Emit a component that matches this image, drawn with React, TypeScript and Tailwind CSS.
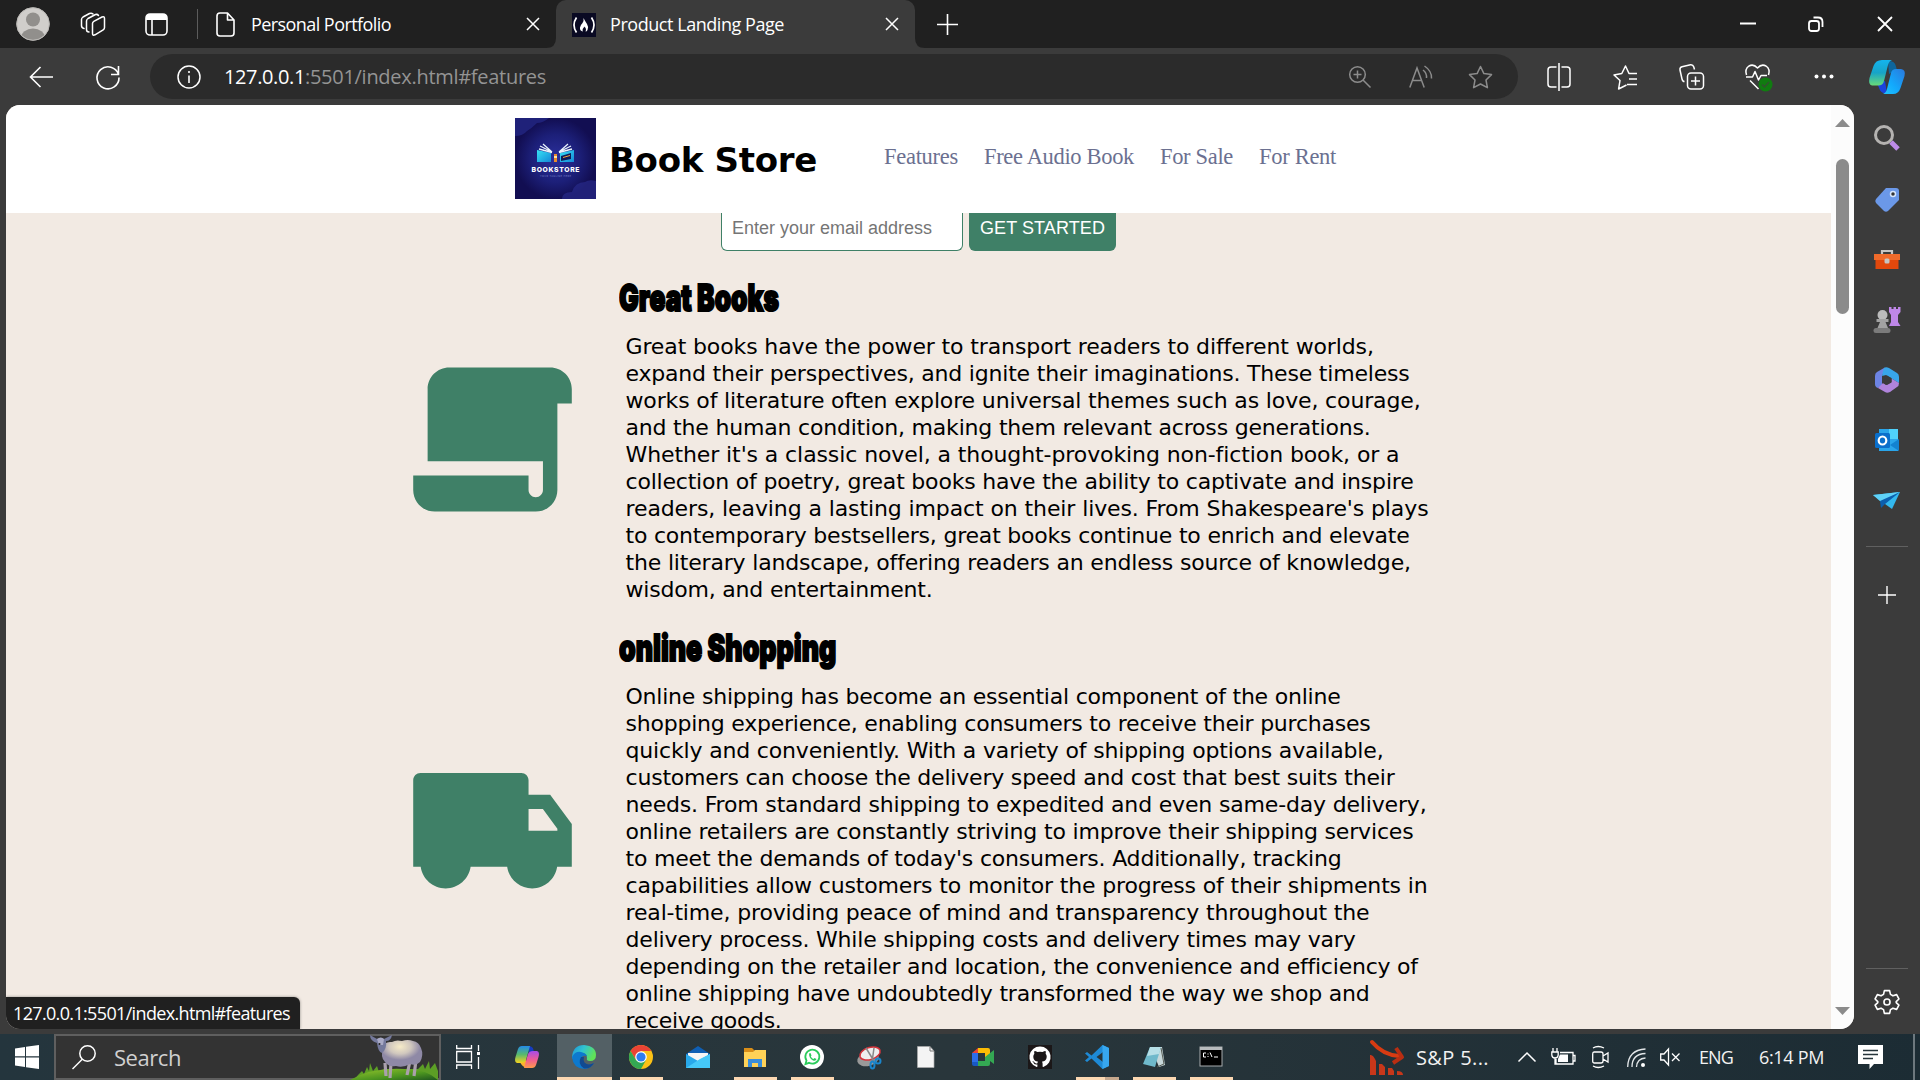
import React, { useLayoutEffect, useRef } from "react";

/* Single line of text whose tracking is adjusted so that it spans `w` pixels. */
function Fit({ w, children, className = "" }: { w: number; children: string; className?: string }) {
  const ref = useRef<HTMLSpanElement>(null);
  useLayoutEffect(() => {
    const el = ref.current;
    if (!el) return;
    el.style.letterSpacing = "0px";
    const natural = el.getBoundingClientRect().width;
    el.style.letterSpacing = (w - natural) / children.length + "px";
  }, [w, children]);
  return (
    <span ref={ref} className={"inline-block shrink-0 whitespace-pre " + className}>
      {children}
    </span>
  );
}

/* Heavy condensed heading, squeezed horizontally to `w` pixels. */
function Squeeze({ w, children, className = "" }: { w: number; children: string; className?: string }) {
  const ref = useRef<HTMLSpanElement>(null);
  useLayoutEffect(() => {
    const el = ref.current;
    if (el) el.style.transform = "scaleX(" + w / el.offsetWidth + ")";
  }, [w, children]);
  return (
    <span ref={ref} className={"inline-block origin-left whitespace-pre " + className}>
      {children}
    </span>
  );
}

type IconProps = { w: number; h: number; vb?: string; className?: string; children: React.ReactNode };
function Ico({ w, h, vb, className = "", children }: IconProps) {
  return (
    <svg width={w} height={h} viewBox={vb ?? `0 0 ${w} ${h}`} className={"shrink-0 overflow-visible " + className} fill="none" stroke="none">
      {children}
    </svg>
  );
}

const CloseX = ({ className = "" }: { className?: string }) => (
  <Ico w={14} h={14} className={className}>
    <path d="M1 1L13 13M13 1L1 13" stroke="#fff" strokeWidth="1.5" />
  </Ico>
);

function TabStrip() {
  return (
    <div className="flex h-12 items-center bg-[#202020] text-white">
      <Ico w={34} h={34} className="ml-4">
        <defs><clipPath id="av"><circle cx="17" cy="17" r="16" /></clipPath></defs>
        <circle cx="17" cy="17" r="16.5" fill="#d0cecb" />
        <g clipPath="url(#av)"><circle cx="17" cy="12.5" r="7" fill="#918f8c" /><ellipse cx="17" cy="31" rx="12" ry="9.5" fill="#918f8c" /></g>
        <circle cx="17" cy="17" r="16.3" stroke="#bab8b5" strokeWidth="1" />
      </Ico>
      <Ico w={26} h={25} className="ml-[30px]">
        <g stroke="#fff" strokeWidth="1.5" strokeLinejoin="round" strokeLinecap="round">
          <path d="M12.5 11.500Q12.500 10 13.800 9.300L22 5Q24.500 4 24.500 6.500V15.500Q24.500 17 23.200 17.800L15 22.800Q12.500 24 12.500 21.500Z" />
          <path d="M9 20Q6.500 20 6.500 17.500V9Q6.500 7.500 8 6.500L15.500 2.500Q17.500 2 18.500 3.500" />
          <path d="M4 16.500Q1.500 16 1.500 13.500V7.500Q1.500 6 3 5L9.500 1.500Q11.500 .6 13 2" />
        </g>
      </Ico>
      <Ico w={23} h={23} className="ml-[39px]">
        <rect x="1" y="1" width="21" height="21" rx="4" stroke="#fff" strokeWidth="1.6" />
        <path d="M1 7V5Q1 1 5 1H18Q22 1 22 5V7Z" fill="#fff" /><path d="M7 6V22" stroke="#fff" strokeWidth="1.6" />
      </Ico>
      <div className="ml-[29px] h-[30px] w-px bg-[#5c5c5c]" />
      <Ico w={19} h={25} className="ml-[18px]">
        <path d="M4 1H11.500L18 8V21Q18 24 15 24H4Q1 24 1 21V4Q1 1 4 1ZM11.500 1V8H18" stroke="#fff" strokeWidth="1.6" strokeLinejoin="round" />
      </Ico>
      <div className="mb-px ml-4 w-[275px] leading-none"><Fit w={140} className="text-[18px]">Personal Portfolio</Fit></div>
      <CloseX />
      <div className="relative ml-4 flex h-12 w-[359px] items-center rounded-t-[10px] bg-[#3b3b3b]">
        <Ico w={10} h={10} className="absolute bottom-0 -left-2.5"><path d="M10 0V10H0Q10 10 10 0Z" fill="#3b3b3b" /></Ico>
        <Ico w={10} h={10} className="absolute bottom-0 -right-2.5"><path d="M0 0V10H10Q0 10 0 0Z" fill="#3b3b3b" /></Ico>
        <Ico w={24} h={24} className="mt-0.5 ml-4">
          <rect width="24" height="24" fill="#0a0a23" />
          <path d="M4.500 4.500Q-.5 12 4.500 19.500M19.500 4.500Q24.500 12 19.500 19.500" stroke="#fff" strokeWidth="1.7" />
          <path d="M11.500 5Q13 8 15 11Q17 14 15.500 17Q14.800 18.500 13.500 18.500Q15 15.500 12 13.500Q12 15 11 15.500Q10 17 11 18.500Q7.500 18 8 14.500Q8.500 12 10.500 10Q12 8 11.500 5Z" fill="#fff" />
        </Ico>
        <div className="mb-px ml-[14px] w-[275px] leading-none"><Fit w={174} className="text-[18px]">Product Landing Page</Fit></div>
        <CloseX />
      </div>
      <Ico w={21} h={21} className="ml-[22px]"><path d="M10.500 0V21M0 10.500H21" stroke="#fff" strokeWidth="1.6" /></Ico>
      <Ico w={16} h={16} className="ml-auto"><path d="M0 7.500H16" stroke="#fff" strokeWidth="2" /></Ico>
      <Ico w={16} h={16} className="ml-[52px]">
        <rect x="1" y="5" width="10" height="10" rx="2.500" stroke="#fff" strokeWidth="1.8" /><path d="M5.500 1.500H10Q14.500 1.500 14.500 6V11" stroke="#fff" strokeWidth="1.8" />
      </Ico>
      <Ico w={16} h={16} className="mr-[27px] ml-[53px]"><path d="M1 1L15 15M15 1L1 15" stroke="#fff" strokeWidth="1.8" /></Ico>
    </div>
  );
}

const STAR = "M12.500 1.500L15.900 8.600L23.500 9.600L18 15L19.400 22.700L12.500 19L5.600 22.700L7 15L1.500 9.600L9.100 8.600Z";

function Toolbar() {
  return (
    <div className="flex h-[57px] items-center bg-[#3b3b3b]">
      <Ico w={24} h={22} className="ml-[29px]"><path d="M24 11H1.500M11.500 1L1.500 11L11.500 21" stroke="#fff" strokeWidth="1.6" /></Ico>
      <Ico w={24} h={24} className="ml-[43px]"><path d="M22.500 9.500A11 11 0 1 0 23 12.500M22.500 1V9.500H15" stroke="#fff" strokeWidth="1.6" /></Ico>
      <div className="ml-[30px] flex h-[45px] w-[1368px] items-center rounded-full bg-[#2b2b2b] text-[20px] leading-none">
        <Ico w={24} h={24} className="ml-[27px]"><circle cx="12" cy="12" r="11" stroke="#fff" strokeWidth="1.5" /><path d="M12 10.500V18M12 6V8" stroke="#fff" strokeWidth="1.6" /></Ico>
        <Fit w={81} className="ml-[23px] text-white">127.0.0.1</Fit>
        <Fit w={241} className="text-[#949494]">:5501/index.html#features</Fit>
        <Ico w={22} h={22} className="ml-auto"><g stroke="#8c8c8c" strokeWidth="1.5"><circle cx="8.500" cy="8.500" r="7.800" /><path d="M14 14L21.500 21.500M8.500 4.500V12.500M4.500 8.500H12.500" /></g></Ico>
        <Ico w={24} h={22} className="ml-[38px]"><g stroke="#8c8c8c" strokeWidth="1.5"><path d="M.8 21.500L8 2L15.200 21.500M3 14.500H13M14 4Q18 7 17.500 12M15.500 0Q23 5 22.500 12.500" /></g></Ico>
        <Ico w={25} h={24} className="mr-[25px] ml-[35px]"><path d={STAR} stroke="#8c8c8c" strokeWidth="1.500" strokeLinejoin="round" /></Ico>
      </div>
      <Ico w={24} h={28} className="ml-[29px]"><path d="M9.500 4H4Q1 4 1 7V21Q1 24 4 24H9.500M14.500 4H20Q23 4 23 7V21Q23 24 20 24H14.500M12 0V28" stroke="#fff" strokeWidth="1.5" /></Ico>
      <Ico w={25} h={26} className="ml-[42px]"><path d="M13.500 21L5.600 25L7 16.500L1 11L8.800 9.500L12.500 2L16 9.500H24M16 15H24M14 20.500H24" stroke="#fff" strokeWidth="1.5" strokeLinejoin="round" /></Ico>
      <Ico w={25} h={26} className="ml-[41px]"><g stroke="#fff" strokeWidth="1.5"><rect x="8.500" y="9" width="16" height="16" rx="3.500" /><path d="M16.500 12.500V21.500M12 17H21M5.500 17.500Q3.500 17.500 3 15L1 6Q.6 3.500 3 2.800L11.500 .8Q14 .5 14.800 3L15.500 5.500" /></g></Ico>
      <Ico w={28} h={28} className="ml-[41px]"><g stroke="#fff" strokeWidth="1.500" strokeLinejoin="round"><path d="M1.500 12Q-.5 6 4 3Q8.500 .5 12.500 5Q16.500 .5 21 3Q25.500 6 23.500 12M1 14H7.500L10 8.500L13.500 17L16 12.500H22M5 17.500L13.500 26" /></g><circle cx="20.500" cy="21.500" r="7" fill="#107c10" /><path d="M17 21.500L19.500 24L24 19" stroke="#33502f" strokeWidth="1.5" /></Ico>
      <Ico w={20} h={5} className="ml-[41px]"><g fill="#fff"><circle cx="2.500" cy="2.500" r="2" /><circle cx="10" cy="2.500" r="2" /><circle cx="17.500" cy="2.500" r="2" /></g></Ico>
      <Ico w={36} h={34} vb="0 0 36 34" className="ml-[35px]">
        <defs>
          <linearGradient id="ca" x1="0" y1="0" x2="0" y2="1"><stop offset="0" stopColor="#14b4ee" /><stop offset=".5" stopColor="#17a4c8" /><stop offset="1" stopColor="#68da79" /></linearGradient>
          <linearGradient id="cb" x1="1" y1="0" x2="0" y2="1"><stop offset="0" stopColor="#2b78dc" /><stop offset=".6" stopColor="#12aafd" /><stop offset="1" stopColor="#22c4fb" /></linearGradient>
        </defs>
        <path d="M19 1Q25 .5 26.500 5L28 10L20 14Z" fill="#0e669c" />
        <path d="M8 23L16 21L18 33Q12 34 10.500 29Z" fill="#1b43dc" />
        <path d="M13 0H23Q20 1 19 5L15 21Q14 25.500 9 25.500H3Q-1 25 .5 18L4.500 6Q6.500 0 13 0Z" fill="url(#ca)" />
        <path d="M27 9H32Q37 9.500 35.500 16L31.500 28Q29.500 34 24 34H14Q17 33 18 29L22 13Q23 9 27 9Z" fill="url(#cb)" />
      </Ico>
    </div>
  );
}

function BookLogo() {
  return (
    <svg width="81" height="81" viewBox="0 0 81 81" className="mb-px shrink-0">
      <defs>
        <radialGradient id="lg"><stop offset="0" stopColor="#2b2f9c" /><stop offset=".6" stopColor="#1c1f78" /><stop offset="1" stopColor="#120e52" /></radialGradient>
        <linearGradient id="lb" x1="0" y1="0" x2="1" y2="1"><stop offset="0" stopColor="#37e3f4" /><stop offset="1" stopColor="#1488d8" /></linearGradient>
      </defs>
      <rect width="81" height="81" fill="url(#lg)" />
      <path d="M0 18Q8 18 12 13Q17 10 22 5Q28 5 34 0H0Z" fill="#252a8a" opacity=".7" />
      <path d="M47 81Q47 74 57 74Q60 64 70 64Q74 61 81 63V81Z" fill="#2b2f92" opacity=".6" />
      <path d="M22 32L36 35V44H22Z" fill="url(#lb)" /><path d="M59 32L45 35V44H59Z" fill="url(#lb)" />
      <path d="M46 38L56 35V41L46 43Z" fill="#101b58" /><path d="M48 39.500L55 37.500" stroke="#f1a23b" />
      <path d="M39 36H42V44H39Z" fill="#e88a2c" /><path d="M39 38H42V40H39Z" fill="#ffe2a0" />
      <path d="M24 31L37 34.500M25 28L37 34M28 26L37 34M57 31L44 34.500M56 28L44 34M53 26L44 34" stroke="#e9f3fb" strokeWidth="1.3" />
      <text x="40.500" y="54" textAnchor="middle" textLength="48" fill="#fff" fontFamily="Inter, sans-serif" fontWeight="800" fontSize="6.800">BOOKSTORE</text>
      <text x="40.500" y="58.500" textAnchor="middle" textLength="31" fill="#7a80c8" fontFamily="Inter, sans-serif" fontSize="2.500">YOUR TAGLINE HERE</text>
    </svg>
  );
}

const books: [string, number][] = [
  ["Great books have the power to transport readers to different worlds,", 748],
  ["expand their perspectives, and ignite their imaginations. These timeless", 784],
  ["works of literature often explore universal themes such as love, courage,", 795],
  ["and the human condition, making them relevant across generations.", 745],
  ["Whether it's a classic novel, a thought-provoking non-fiction book, or a", 774],
  ["collection of poetry, great books have the ability to captivate and inspire", 788],
  ["readers, leaving a lasting impact on their lives. From Shakespeare's plays", 803],
  ["to contemporary bestsellers, great books continue to enrich and elevate", 784],
  ["the literary landscape, offering readers an endless source of knowledge,", 785],
  ["wisdom, and entertainment.", 307],
];
const shopping: [string, number][] = [
  ["Online shipping has become an essential component of the online", 715],
  ["shopping experience, enabling consumers to receive their purchases", 745],
  ["quickly and conveniently. With a variety of shipping options available,", 758],
  ["customers can choose the delivery speed and cost that best suits their", 769],
  ["needs. From standard shipping to expedited and even same-day delivery,", 801],
  ["online retailers are constantly striving to improve their shipping services", 788],
  ["to meet the demands of today's consumers. Additionally, tracking", 716],
  ["capabilities allow customers to monitor the progress of their shipments in", 802],
  ["real-time, providing peace of mind and transparency throughout the", 744],
  ["delivery process. While shipping costs and delivery times may vary", 730],
  ["depending on the retailer and location, the convenience and efficiency of", 792],
  ["online shipping have undoubtedly transformed the way we shop and", 744],
  ["receive goods.", 156],
];

function Feature({ title, titleW, lines, icon, className }: { title: string; titleW: number; lines: [string, number][]; icon: React.ReactNode; className: string }) {
  return (
    <div className={"flex pl-[399.500px] " + className}>
      {icon}
      <div className="ml-10">
        <h2 className="h-[55px] font-[Inter] text-[36.500px] leading-[40px] font-black">
          <Squeeze w={titleW} className="[-webkit-text-stroke:2px_black]">{title}</Squeeze>
        </h2>
        <p className="pl-[7px] font-['DejaVu_Sans'] text-[22px] leading-[27px]">
          {lines.map(([t, w]) => (
            <span key={t} className="block h-[27px]"><Fit w={w}>{t}</Fit></span>
          ))}
        </p>
      </div>
    </div>
  );
}

function Page() {
  return (
    <div className="relative ml-1.5 flex h-[924px] w-[1848px] overflow-hidden rounded-[14px] bg-[#f2eae3] text-black">
      <div className="flex w-[1825px] flex-col">
        <header className="flex h-[108px] shrink-0 items-center bg-white">
          <div className="ml-[509px]"><BookLogo /></div>
          <Fit w={208} className="mt-0.5 ml-[13px] font-['DejaVu_Sans'] text-[34px] font-bold">Book Store</Fit>
          <nav className="mb-1 ml-[67px] flex gap-[26px] font-['Liberation_Serif'] text-[22.500px] text-[#6b7090]">
            <Fit w={74}>Features</Fit><Fit w={150}>Free Audio Book</Fit><Fit w={73}>For Sale</Fit><Fit w={77}>For Rent</Fit>
          </nav>
        </header>
        <form className="ml-[715px] flex h-[38px] shrink-0 gap-1.5 font-['Liberation_Sans'] text-[18px] leading-[30px]">
          <div className="w-[242px] rounded-b-[6px] border border-t-0 border-[#3f8067] bg-white pl-2.5 text-[#757575]"><Fit w={200}>Enter your email address</Fit></div>
          <div className="w-[147px] rounded-b-[6px] bg-[#3f8067] pl-[11px] text-white"><Fit w={125}>GET STARTED</Fit></div>
        </form>
        <Feature className="mt-[27px]" title="Great Books" titleW={160} lines={books} icon={
          <svg width="173" height="173" viewBox="0 0 24 24" fill="#3f8067" className="mt-[75px] shrink-0">
            <path d="M20 2C21.660 2 23 3.340 23 5V7H21V19C21 20.660 19.660 22 18 22H4C2.340 22 1 20.660 1 19V17H17V19C17 19.550 17.450 20 18 20C18.550 20 19 19.550 19 19V15H3V5C3 3.340 4.340 2 6 2H20Z" />
          </svg>} />
        <Feature className="mt-[25px]" title="online Shopping" titleW={217} lines={shopping} icon={
          <svg width="173" height="173" viewBox="0 0 24 24" fill="#3f8067" className="mt-[109px] shrink-0">
            <path d="M8.965 18C8.722 19.696 7.263 21 5.500 21S2.278 19.696 2.035 18H1V6C1 5.448 1.448 5 2 5H16C16.552 5 17 5.448 17 6V8H20L23 12.056V18H20.965C20.722 19.696 19.263 21 17.500 21S14.278 19.696 14.035 18H8.965ZM17 10V13H21V12.715L18.992 10H17Z" />
          </svg>} />
      </div>
      <div className="flex w-[23px] flex-col items-center bg-[#fcfcfc]">
        <Ico w={15} h={8} className="mt-[14px]"><path d="M0 8L7.500 0L15 8Z" fill="#8b8b8b" /></Ico>
        <div className="mt-8 h-[155px] w-[13px] rounded-full bg-[#8b8b8b]" />
        <Ico w={15} h={8} className="mt-auto mb-[14px]"><path d="M0 0L7.500 8L15 0Z" fill="#8b8b8b" /></Ico>
      </div>
      <div className="absolute bottom-0 left-0 flex h-8 w-[294px] items-center rounded-tr-[6px] bg-[#202020] pl-[7px] font-['Open_Sans'] text-[18px] text-white shadow-[0_0_3px_rgba(0,0,0,0.4)]">
        <Fit w={277}>127.0.0.1:5501/index.html#features</Fit>
      </div>
    </div>
  );
}

const sideIcons: React.ReactNode[] = [
  <g key="s"><circle cx="11" cy="11" r="8.500" stroke="#b5b3b1" strokeWidth="3" /><path d="M18 18L25 25" stroke="#bd8be8" strokeWidth="5" /></g>,
  <g key="t"><path d="M13 3H23Q26 3 26 6V15L15 26Q13 27.500 11 26L3 18Q1.500 16 3 14Z" fill="#6b98e8" /><circle cx="20" cy="9" r="2.500" fill="#333" stroke="#d6e5fb" strokeWidth="1.5" /></g>,
  <g key="b"><path d="M9 10V6H19V10" stroke="#c6c4c2" strokeWidth="2.200" /><path d="M1 9H27V15H1Z" fill="#f06a2a" /><path d="M2.500 15H25.500V24H2.500Z" fill="#e2480c" /><rect x="11.500" y="13.500" width="5" height="5" rx="1.500" fill="#c6c4c2" /></g>,
  <g key="c"><path d="M16 1H18.500V3H20.500V1H23V3H25V1H27.500V6L25 9V16L27.500 20H16L18 16V9L16 6Z" fill="#bf87e8" /><circle cx="9.500" cy="9" r="5" fill="#bbb" /><path d="M3.500 13H15.500V16H12.500L15 22H4.500L7 16H3.500Z" fill="#a2a2a2" /><rect x=".5" y="22" width="17" height="5" rx="2.500" fill="#7b7b7b" /></g>,
  <g key="m"><path d="M11 2L4 6Q2 7 2 10V18Q2 21 5 22L9 20V9L15 5L12 1.500Z" fill="#6d84e4" /><path d="M11 2Q13 .5 16 2L24 7Q26 8 26 11V17L18.500 12.500L13 9L9 10Q10 5 11 2Z" fill="#38a6ea" /><path d="M5 22L10 17L13 19L18.500 16V12.500L26 17Q26 20 24 21L17 26Q14 27.500 12 26Z" fill="#b084dc" /><path d="M10 12L14 9.500L18.500 12V16.500L14 19L10 17Z" fill="#3b3b3b" /></g>,
  <g key="o"><path d="M6 2H25V24H6Z" fill="#2aa5ea" /><path d="M16 2H25V12H16Z" fill="#50d2fa" /><path d="M26 12L17 18L26 24Z" fill="#1382d0" /><rect x="2" y="6" width="15" height="15" rx="1.500" fill="#0a6fcb" /><ellipse cx="9.500" cy="13.500" rx="3.800" ry="4" stroke="#fff" strokeWidth="2.200" /></g>,
  <g key="p"><path d="M0 8L27 5L19 22L12 17Z" fill="#33b8ee" /><path d="M0 8L27 5L8 15Z" fill="#5fd2f8" /><path d="M7 14L27 5L12 17L8 21Z" fill="#0c5fae" /></g>,
];

function Sidebar() {
  return (
    <aside className="flex w-[66px] flex-col items-center">
      <div className="mt-[19px] flex flex-col gap-[32.500px]">
        {sideIcons.map((icon, i) => <Ico key={i} w={28} h={28}>{icon}</Ico>)}
      </div>
      <div className="mt-[31px] h-px w-[42px] shrink-0 bg-[#606060]" />
      <Ico w={18} h={18} className="mt-[39px] mr-px"><path d="M9 0V18M0 9H18" stroke="#fff" strokeWidth="1.4" /></Ico>
      <div className="mt-auto h-px w-[42px] shrink-0 bg-[#606060]" />
      <Ico w={26} h={26} vb="0 0 24 24" className="mt-5 mb-[19px]">
        <path d="M9.600 1.500H14.400L15.200 5L17.500 6.300L20.900 5.200L23 9.200L20.500 11.700V12.500L23 14.800L20.900 18.800L17.500 17.700L15.200 19L14.400 22.500H9.600L8.800 19L6.500 17.700L3.100 18.800L1 14.800L3.500 12.500V11.700L1 9.200L3.100 5.200L6.500 6.300L8.800 5Z" stroke="#fff" strokeWidth="1.500" strokeLinejoin="round" /><circle cx="12" cy="12" r="2.800" stroke="#fff" strokeWidth="1.500" />
      </Ico>
    </aside>
  );
}

function Sheep() {
  return (
    <svg width="88" height="45" viewBox="0 0 88 45" className="ml-auto shrink-0">
      <defs>
        <linearGradient id="gr" x1="0" y1="0" x2="1" y2="1"><stop offset="0" stopColor="#9ac92d" /><stop offset=".6" stopColor="#4b9420" /><stop offset="1" stopColor="#1e551f" /></linearGradient>
        <radialGradient id="wool" cx=".45" cy=".25"><stop offset="0" stopColor="#f6ebc8" /><stop offset=".55" stopColor="#d0c7be" /><stop offset="1" stopColor="#8f89a6" /></radialGradient>
      </defs>
      <path d="M8 40L12 36L14 39L17 32L19 36L20 28L23 36L27 31L29 37L34 34H68L73 29L75 34L79 26L80 34L85 28L88 36V45H4Z" fill="#5c9e25" />
      <path d="M0 45Q22 32 55 34Q76 34 88 45Z" fill="url(#gr)" />
      <path d="M35 28L36 41M41 28L40 43M60 26L57 40M66 25L64 41" stroke="#aaa0ac" strokeWidth="3.200" />
      <path d="M33 13Q34 6 42 7Q46 4.500 52 6Q58 4 63 6Q69 7 71 13Q74 20 70 27Q66 31 60 29Q53 33 46 31Q38 32 35 27Q30 22 33 13Z" fill="url(#wool)" />
      <path d="M20 0L27 4Q31 2 34 4L42 0Q41 6 36 6Q37 14 32 18Q28 17 27 8Q20 6 20 0Z" fill="#74799c" />
      <path d="M27 4Q31 1 34 4L33 10H29Z" fill="#a9aac6" /><circle cx="29.500" cy="9" r="1" fill="#222" />
    </svg>
  );
}

type App = { name: string; active?: boolean; open?: boolean; icon: React.ReactNode };
const apps: App[] = [
  { name: "copilot", icon: <g>
    <path d="M13 1Q18 1 18.500 5L19 9H14Z" fill="#163cc2" /><path d="M5 17L11 15L12 23Q7 22 5 17Z" fill="#ffb12d" />
    <path d="M7 1H15L11 15Q10 18 6 18H2Q-1 17 .5 12L3 4Q4 1 7 1Z" fill="url(#tkA)" /><path d="M18 6H22Q25 7 23.500 12L21 20Q20 23 17 23H9L13 9Q14 6 18 6Z" fill="url(#tkB)" /></g> },
  { name: "edge", active: true, open: true, icon: <g>
    <path d="M0 12Q1 0 12 0Q24 1 24 10Q24 16 18 16Q14 16 15 13Q15 8 9 8Q3 8 0 14Z" fill="url(#tkE)" />
    <path d="M0 12Q3 6 9 7Q14 8 15 11Q9 10 9 15Q10 21 17 20.500L22 18Q18 24 12 24Q1 23 0 12Z" fill="#0d79ce" />
    <path d="M9 12Q5 19 12 23.500Q19 24 22 18Q16 21 12.500 17.500Q11 15 12 12Z" fill="#124a91" /></g> },
  { name: "chrome", open: true, icon: <g>
    <circle cx="12" cy="12" r="12" fill="#fbc116" /><path d="M1.600 6A12 12 0 0 1 22.400 6H12L7 15Z" fill="#ea4335" /><path d="M1.600 6A12 12 0 0 0 12 24L17 15L12 17L7 15Z" fill="#34a853" />
    <circle cx="12" cy="12" r="5.800" fill="#fff" /><circle cx="12" cy="12" r="4.600" fill="#2f7cf0" /></g> },
  { name: "mail", icon: <g><path d="M0 9L12 1L24 9V14H0Z" fill="#0f5fb4" /><path d="M2 8H22V16H2Z" fill="#f5f5f5" /><path d="M0 9L12 16L24 9V23H0Z" fill="#28a8ea" /><path d="M0 23L14 14L24 9V23Z" fill="#45c8f8" /></g> },
  { name: "explorer", open: true, icon: <g><path d="M1 3H9L12 6V10H1Z" fill="#d98e18" /><path d="M1 7H10L12 5H23V22H1Z" fill="#ffd257" /><path d="M5 22V14H19V22H15V18H9V22Z" fill="#3a8edb" /></g> },
  { name: "whatsapp", open: true, icon: <g><circle cx="12" cy="12" r="12" fill="#fff" /><path d="M5.500 19L6.500 15.500A7 7 0 1 1 9 17.800Z" stroke="#2bcb5c" strokeWidth="1.800" /><path d="M9 8.500L10.500 8L11.500 10.500L10.800 11.500Q12 13.500 13.500 14L14.500 13L16.500 14Q16 16.500 13 15.500Q9 13.500 9 8.500Z" fill="#2bcb5c" /></g> },
  { name: "snip", icon: <g><ellipse cx="11" cy="14" rx="11" ry="7" fill="#999" transform="rotate(-15 11 14)" /><ellipse cx="13" cy="8.500" rx="10.500" ry="6" fill="#eee" stroke="#d5333b" strokeWidth="1.500" transform="rotate(-18 13 8.500)" /><path d="M9 3L17 16M17 3L15 17" stroke="#888" strokeWidth="1.500" /><circle cx="21" cy="16" r="2.500" stroke="#1a85cc" strokeWidth="2" /><ellipse cx="15.500" cy="20" rx="2" ry="3.500" stroke="#1a85cc" strokeWidth="2" /></g> },
  { name: "file", icon: <g><path d="M3.500 1.500H16L20 6V22.500H3.500Z" fill="#f4f4f4" stroke="#aaa" strokeWidth=".7" /><path d="M16 1.500V6H20" stroke="#777" /></g> },
  { name: "meet", icon: <g><path d="M1 8L7 3V8Z" fill="#ea4335" /><path d="M1 8H7V17H1Z" fill="#2c6de9" /><path d="M1 17H7V21H3Q1 21 1 19Z" fill="#1958c4" /><path d="M7 3H17Q19 3 19 5V12L14 15V8H7Z" fill="#fbbc04" /><path d="M7 16H14V12L23 5V19L19 16V19Q19 21 17 21H7Z" fill="#34a853" /></g> },
  { name: "github", icon: <g><path d="M0 0H24V24H0Z" fill="#1b1718" /><path d="M12 1.500a10.500 10.500 0 0 0-3.300 20.500c.5.100.7-.2.700-.5v-2c-2.900.6-3.500-1.200-3.500-1.200-.5-1.200-1.200-1.500-1.200-1.500-.9-.7.100-.6.100-.6 1.100.1 1.600 1.100 1.600 1.100.9 1.600 2.500 1.100 3 .9.100-.7.400-1.100.7-1.400-2.300-.3-4.800-1.200-4.800-5.200 0-1.100.4-2.100 1.100-2.800-.1-.3-.5-1.300.1-2.800 0 0 .9-.3 2.900 1.100a10 10 0 0 1 5.200 0c2-1.400 2.900-1.100 2.900-1.100.6 1.500.2 2.500.1 2.800.7.700 1.100 1.700 1.100 2.800 0 4-2.500 4.900-4.800 5.200.4.300.7.900.7 1.900v2.800c0 .3.200.6.700.5A10.500 10.500 0 0 0 12 1.500Z" fill="#fff" /></g> },
  { name: "code", open: true, icon: <g><path d="M17.500 0L24 3V21L17.500 24L6.500 13.500L2 17L0 15.500L4 12L0 8.500L2 7L6.500 10.500ZM18 7L11.500 12L18 17Z" fill="#1e8ad6" /><path d="M17.500 0L24 3V21L17.500 24Z" fill="#37a7ef" /></g> },
  { name: "notepad", open: true, icon: <g><path d="M9 2H20L23 20L17 22Z" fill="#c7d7d9" /><path d="M8 2H19L13 22L1 19Z" fill="#6fb9cb" /><path d="M8 2H19L17 9L5 11Z" fill="#b6dfe7" /><path d="M19 3L22 19L15 22" stroke="#575c55" /></g> },
  { name: "terminal", open: true, icon: <g><rect x="1" y="2" width="22" height="19" fill="#000" stroke="#a7abad" /><path d="M1 2H23V5H1Z" fill="#b7bbbd" /><path d="M7 8H4.500V12H7M9 8.500V9.500M9 11V12M11 7.500L13 12M15 12H19" stroke="#fff" strokeWidth="1" /></g> },
];

function Taskbar() {
  return (
    <footer className="flex h-[46px] items-center bg-linear-to-r from-[#24353d] via-[#29363b] to-[#1c2c34] text-[#f2f2f2]">
      <Ico w={24} h={24} className="ml-[15px]"><path d="M0 3.500L10 2V11.300H0ZM11 1.800L24 0V11.300H11ZM0 12.500H10V22L0 20.500ZM11 12.500H24V24L11 22.200Z" fill="#fff" /></Ico>
      <div className="ml-[15px] flex h-[46px] w-[387px] items-center border-2 border-[#5f5f5f] bg-[#333] pr-px">
        <Ico w={24} h={24} className="ml-4"><circle cx="15.500" cy="8.500" r="7.700" stroke="#fff" strokeWidth="1.500" /><path d="M10.500 14L.5 24" stroke="#fff" strokeWidth="1.500" /></Ico>
        <Fit w={67} className="mt-px ml-[18px] text-[22px] text-[#d0d0d0]">Search</Fit>
        <Sheep />
      </div>
      <Ico w={24} h={24} className="ml-[15px]"><path d="M.7 0V3.500H15.500V0M.7 6.500H15.500V17H.7ZM.7 24V20H15.500V24M22.500 0V6M22.500 12V24" stroke="#fff" strokeWidth="1.300" /><rect x="21" y="7" width="3" height="3" fill="#fff" /></Ico>
      <svg width="0" height="0" className="absolute">
        <defs>
          <linearGradient id="tkA" x1="0" y1="0" x2="0" y2="1"><stop offset="0" stopColor="#238be9" /><stop offset=".5" stopColor="#58b96d" /><stop offset="1" stopColor="#f5d31f" /></linearGradient>
          <linearGradient id="tkB" x1="0" y1="0" x2="0" y2="1"><stop offset="0" stopColor="#a64bea" /><stop offset=".55" stopColor="#f25f8e" /><stop offset="1" stopColor="#ff9a4a" /></linearGradient>
          <linearGradient id="tkE" x1="0" y1="0" x2="1" y2=".4"><stop offset="0" stopColor="#1b93da" /><stop offset=".5" stopColor="#32c4cf" /><stop offset="1" stopColor="#60e258" /></linearGradient>
        </defs>
      </svg>
      <div className="ml-[18.500px] flex h-full">
        {apps.map((a) => (
          <div key={a.name} className="flex h-full w-[57px] flex-col items-center">
            <div className={"flex h-[43px] w-[55px] items-center justify-center pt-[3px] " + (a.active ? "bg-[#536065]" : "")}>
              <Ico w={24} h={24}>{a.icon}</Ico>
            </div>
            <div className={"flex h-[3px] justify-end " + (a.active ? "w-[55px] " : "w-[43px] ") + (a.open ? "bg-[#fcd8b2]" : "")}>
              {a.name === "code" && <div className="w-[14px] bg-[#c6a88d]" />}
            </div>
          </div>
        ))}
      </div>
      <div className="ml-auto flex items-center font-['Open_Sans']">
        <Ico w={33} h={36}><path d="M2 3Q13 16 29 17" stroke="#d83b12" strokeWidth="4" strokeLinecap="round" /><path d="M26 9L32 18L23 24" stroke="#b92e12" strokeWidth="4" strokeLinejoin="round" /><path d="M0 16Q3 15 6 22V36H0ZM9 25H12L15 28V36H9ZM18 29H22L24 32V36H18ZM27 32Q33 32 33 36H27Z" fill="#c7371a" /></Ico>
        <Fit w={73} className="mt-px ml-[13px] text-[20px]">S&amp;P 5...</Fit>
        <Ico w={18} h={10} className="ml-[29px]"><path d="M.5 9.500L9 1L17.500 9.500" stroke="#fff" strokeWidth="1.500" /></Ico>
        <Ico w={24} h={18} className="ml-[15px]"><path d="M9 4.500H22V16H5V11M22 7.500H24V13H22M2 0V4M6 0V4M.8 4H7.200V7Q7 10 4 10Q1 10 .8 7ZM4 10V16H6" stroke="#fff" strokeWidth="1.300" /><path d="M9 6.500H17V14H7V11Z" fill="#fff" /></Ico>
        <Ico w={17} h={22} className="ml-[17px]"><path d="M2 6H9Q11 6 11 8V15Q11 17 9 17H2Q.7 17 .7 15V8Q.7 6 2 6ZM11 10L16 7V16L11 13M1 2Q6 -1 12 2M1 20Q6 23 12 20" stroke="#fff" strokeWidth="1.300" /></Ico>
        <Ico w={19} h={19} className="ml-[18px]"><path d="M.7 19Q1 2 18.500 1M5 19Q5 6 18.500 5.500M9.500 19Q10 10.500 18.500 10" stroke="#e2e6e8" strokeWidth="1.300" /><circle cx="16" cy="17" r="2" fill="#fff" /></Ico>
        <Ico w={20} h={18} className="ml-[14px]"><path d="M.7 6H4L8.500 1V17L4 12H.7ZM12 5.500L19.500 13M19.500 5.500L12 13" stroke="#fff" strokeWidth="1.300" /></Ico>
        <Fit w={34} className="ml-[19px] text-[18px]">ENG</Fit>
        <Fit w={65} className="ml-[26px] text-[18px]">6:14 PM</Fit>
        <Ico w={25} h={24} className="ml-[34px]"><path d="M0 0H25V19H16L11.500 24V19H0Z" fill="#fff" /><path d="M5 5.500H20M5 9.500H20M5 13.500H15" stroke="#26343b" strokeWidth="1.500" /></Ico>
        <div className="mr-[5px] ml-[30px] h-[46px] w-[2px] bg-[#6d787e]" />
      </div>
    </footer>
  );
}

export default function App() {
  return (
    <div className="flex h-[1080px] w-[1920px] flex-col overflow-hidden bg-[#3b3b3b] font-['Open_Sans',sans-serif]">
      <TabStrip />
      <Toolbar />
      <div className="flex h-[929px] shrink-0">
        <Page />
        <Sidebar />
      </div>
      <Taskbar />
    </div>
  );
}
